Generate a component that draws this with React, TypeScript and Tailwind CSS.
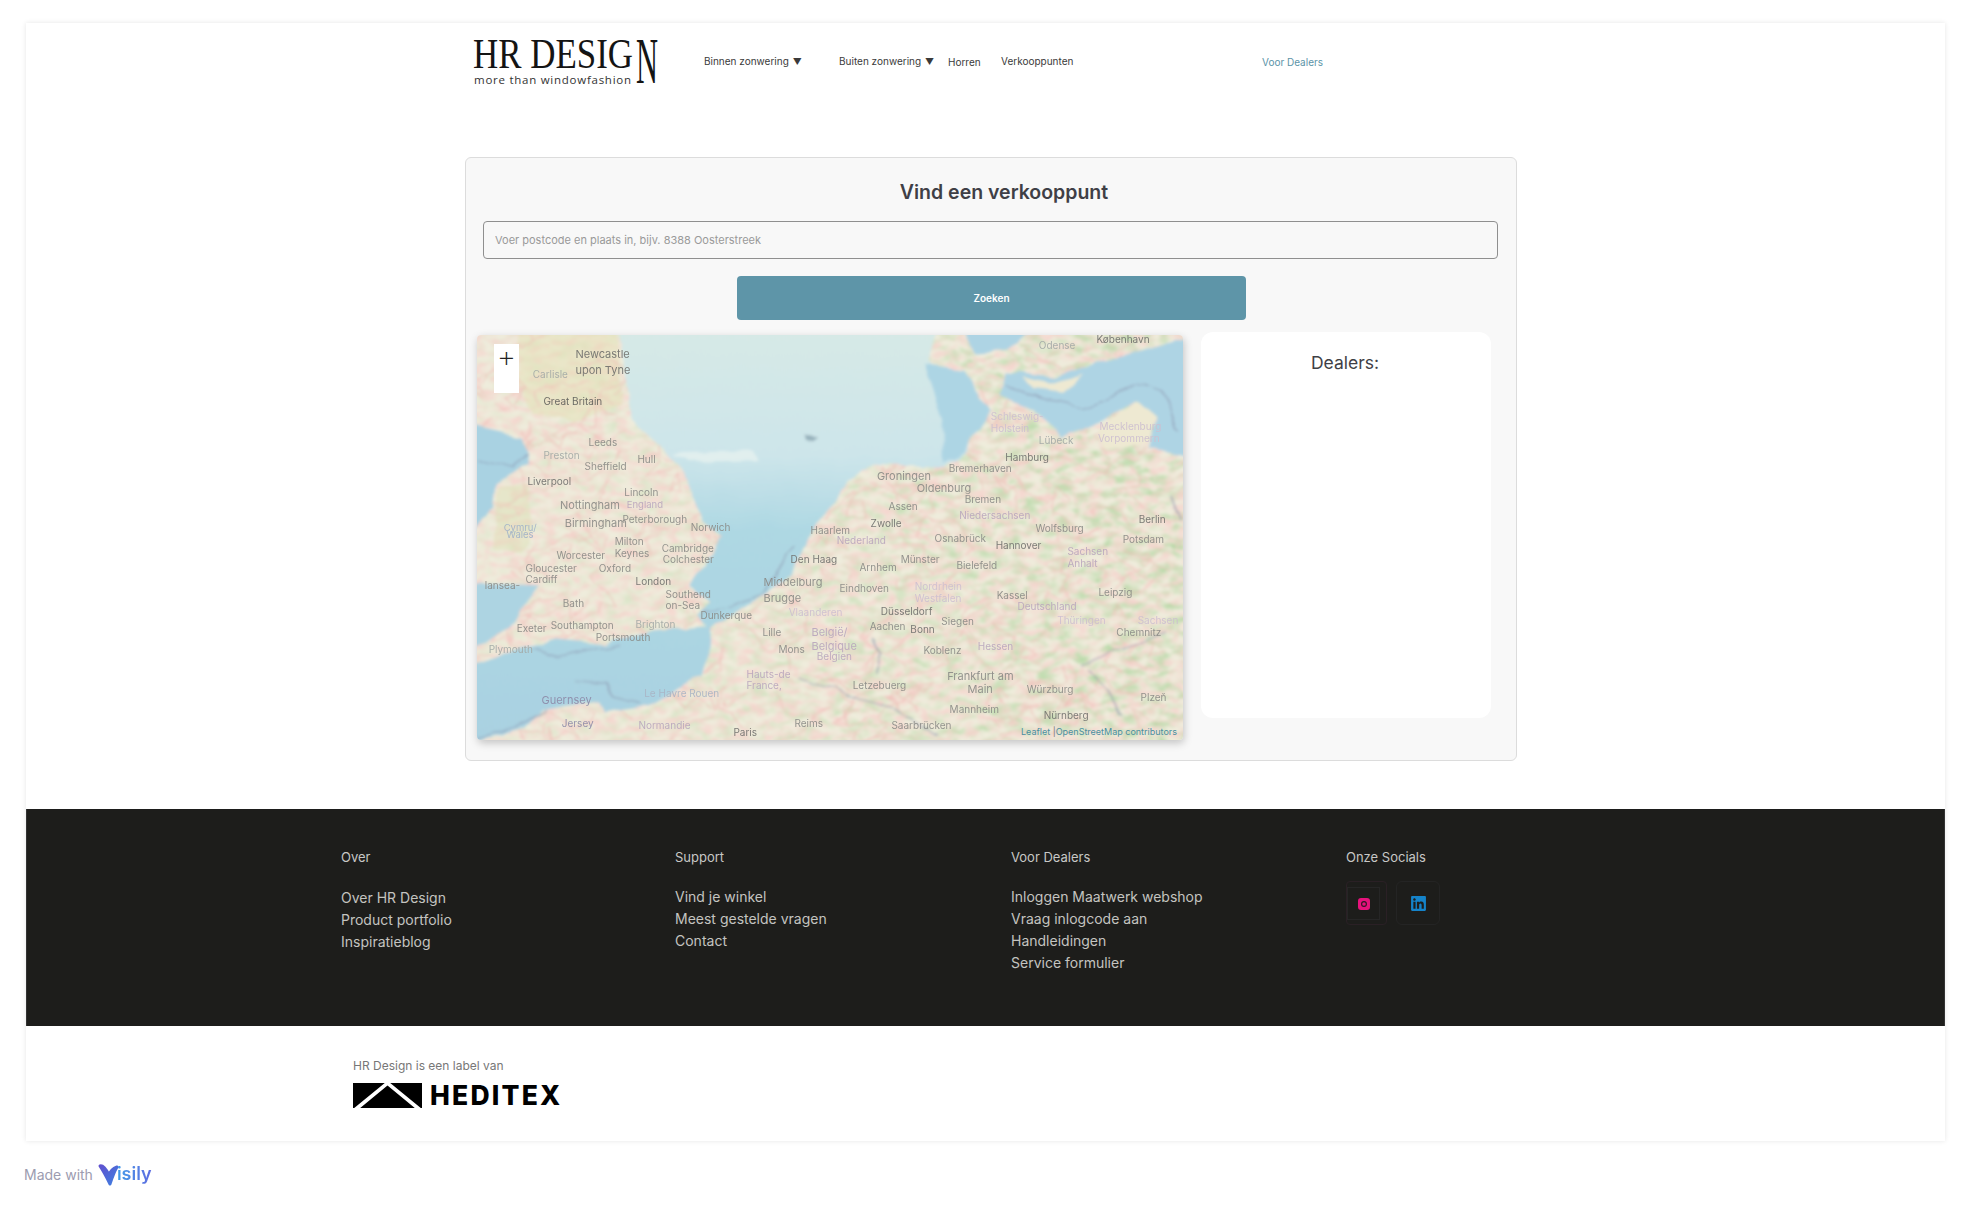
import { FaLinkedin } from "react-icons/fa";

const inter = "font-['Inter','Liberation_Sans',sans-serif]";

// text, left, centre y, size, colour; x and y as measured on the zoomed map crop
const cityDark = "#6f6f6c";
const cityMid = "#8a8a86";
const cityPale = "#a3a9a6";
const region = "#b9a6bd";
const regionPale = "#cdbfd0";

const labels: [string, number, number, number, string][] = [
  ["København", 1313, 56, 10, cityDark],
  ["Odense", 1194, 76, 10, cityPale],
  ["Newcastle", 238, 100, 11, cityDark],
  ["upon Tyne", 238, 148, 11, cityDark],
  ["Carlisle", 150, 163, 10, cityPale],
  ["Great Britain", 172, 244, 10, "#5c5c58"],
  ["Leeds", 265, 365, 10, cityMid],
  ["Preston", 172, 406, 10, cityPale],
  ["Hull", 366, 416, 10, cityMid],
  ["Sheffield", 257, 439, 10, cityMid],
  ["Liverpool", 139, 482, 10, cityDark],
  ["Lincoln", 339, 515, 10, cityMid],
  ["Nottingham", 206, 553, 11, cityMid],
  ["England", 344, 553, 9.5, region],
  ["Birmingham", 216, 607, 11, cityMid],
  ["Peterborough", 335, 596, 10, cityMid],
  ["Norwich", 476, 622, 10, cityMid],
  ["Cymru/", 90, 622, 9.5, "#9fb0c8"],
  ["Wales", 96, 644, 9.5, "#9fb0c8"],
  ["Milton", 319, 662, 10, cityMid],
  ["Keynes", 319, 698, 10, cityMid],
  ["Cambridge", 416, 683, 10, cityMid],
  ["Colchester", 418, 716, 10, cityMid],
  ["Worcester", 199, 704, 10, cityMid],
  ["Gloucester", 135, 743, 10, cityMid],
  ["Oxford", 286, 743, 10, cityMid],
  ["Cardiff", 135, 778, 10, cityMid],
  ["lansea-", 51, 794, 10, cityMid],
  ["London", 362, 782, 10, cityDark],
  ["Southend", 424, 821, 10, cityMid],
  ["on-Sea", 424, 854, 10, cityMid],
  ["Bath", 212, 848, 10, cityMid],
  ["Dunkerque", 496, 884, 10, cityMid],
  ["Exeter", 117, 925, 10, cityMid],
  ["Southampton", 187, 914, 10, cityMid],
  ["Brighton", 362, 911, 10, cityPale],
  ["Portsmouth", 280, 950, 10, cityMid],
  ["Plymouth", 59, 986, 10, cityPale],
  ["Guernsey", 168, 1138, 11, "#8d8aa8"],
  ["Jersey", 210, 1208, 10, "#8d8aa8"],
  ["Le Havre Rouen", 380, 1118, 10, "#a9b4c4"],
  ["Normandie", 368, 1216, 10, region],
  ["Paris", 564, 1235, 10, cityDark],
  ["Reims", 690, 1208, 10, cityMid],
  ["Hauts-de", 591, 1061, 10, region],
  ["France,", 591, 1094, 10, region],
  ["Lille", 624, 935, 10, cityMid],
  ["Mons", 657, 986, 10, cityMid],
  ["België/", 725, 934, 11, region],
  ["Belgique", 725, 978, 11, region],
  ["Belgien", 736, 1007, 10, region],
  ["Middelburg", 626, 784, 11, cityMid],
  ["Brugge", 626, 832, 11, cityMid],
  ["Vlaanderen", 678, 875, 10, regionPale],
  ["Den Haag", 682, 716, 10, cityDark],
  ["Haarlem", 723, 629, 10, cityMid],
  ["Nederland", 777, 661, 10, region],
  ["Zwolle", 847, 608, 10, cityDark],
  ["Assen", 884, 557, 10, cityMid],
  ["Groningen", 860, 466, 11, cityMid],
  ["Oldenburg", 942, 502, 11, cityMid],
  ["Bremen", 1041, 536, 10, cityMid],
  ["Bremerhaven", 1008, 443, 10, cityMid],
  ["Hamburg", 1125, 411, 10, cityDark],
  ["Lübeck", 1194, 359, 10, cityPale],
  ["Schleswig-", 1095, 287, 10, regionPale],
  ["Holstein", 1095, 323, 10, regionPale],
  ["Mecklenburg", 1319, 317, 10, regionPale],
  ["Vorpommern", 1316, 353, 10, regionPale],
  ["Niedersachsen", 1030, 584, 10, region],
  ["Wolfsburg", 1187, 623, 10, cityMid],
  ["Berlin", 1400, 598, 10, cityDark],
  ["Potsdam", 1367, 656, 10, cityMid],
  ["Osnabrück", 979, 653, 10, cityMid],
  ["Hannover", 1105, 674, 10, cityDark],
  ["Sachsen", 1253, 694, 10, region],
  ["Anhalt", 1253, 728, 10, region],
  ["Münster", 909, 716, 10, cityMid],
  ["Arnhem", 824, 740, 10, cityMid],
  ["Bielefeld", 1024, 734, 10, cityMid],
  ["Eindhoven", 783, 803, 10, cityMid],
  ["Nordrhein", 938, 797, 10, regionPale],
  ["Westfalen", 938, 833, 10, regionPale],
  ["Kassel", 1107, 824, 10, cityMid],
  ["Leipzig", 1317, 815, 10, cityMid],
  ["Deutschland", 1150, 857, 10, region],
  ["Düsseldorf", 868, 872, 10, cityDark],
  ["Thüringen", 1232, 899, 10, regionPale],
  ["Sachsen", 1398, 901, 10, regionPale],
  ["Chemnitz", 1354, 935, 10, cityMid],
  ["Siegen", 993, 902, 10, cityMid],
  ["Aachen", 845, 917, 10, cityMid],
  ["Bonn", 929, 926, 10, cityDark],
  ["Koblenz", 956, 989, 10, cityMid],
  ["Hessen", 1068, 977, 10, region],
  ["Frankfurt am", 1005, 1066, 11, cityMid],
  ["Main", 1047, 1105, 11, cityMid],
  ["Würzburg", 1169, 1106, 10, cityMid],
  ["Letzebuerg", 810, 1094, 10, cityMid],
  ["Mannheim", 1010, 1166, 10, cityMid],
  ["Nürnberg", 1204, 1184, 10, cityDark],
  ["Plzeň", 1404, 1130, 10, cityMid],
  ["Saarbrücken", 890, 1214, 10, cityMid],
];

// a fixed scatter of little pink road segments over the land
const roads: string[] = [];
let seed = 17;
const rnd = (n: number) => {
  seed = (seed * 9301 + 49297) % 233280;
  return (seed / 233280) * n;
};
for (let i = 0; i < 260; i++) {
  let x = 40 + rnd(1450);
  let y = 50 + rnd(1200);
  let d = `M${x.toFixed(0)} ${y.toFixed(0)}`;
  for (let j = 0; j < 4; j++) {
    x += rnd(110) - 55;
    y += rnd(110) - 55;
    d += ` L${x.toFixed(0)} ${y.toFixed(0)}`;
  }
  roads.push(d);
}

function MapDrawing() {
  return (
    <svg viewBox="0 0 706 405" className="block w-full h-full">
      <defs>
        <linearGradient id="sea" x1="0" y1="0" x2="0" y2="1">
          <stop offset="0" stopColor="#d6e9e6" />
          <stop offset="0.3" stopColor="#cde5ea" />
          <stop offset="0.48" stopColor="#aed8e3" />
          <stop offset="1" stopColor="#a9d1e1" />
        </linearGradient>
        <linearGradient id="fadeRight" x1="0" y1="0" x2="1" y2="0">
          <stop offset="0" stopColor="#fff" stopOpacity="0.15" />
          <stop offset="0.5" stopColor="#fff" stopOpacity="0.5" />
          <stop offset="1" stopColor="#fff" stopOpacity="0.95" />
        </linearGradient>
        <mask id="rightHeavy">
          <rect width="1568" height="1400" fill="url(#fadeRight)" />
        </mask>
        <filter id="greenNoise" colorInterpolationFilters="sRGB" x="0" y="0" width="100%" height="100%">
          <feTurbulence type="fractalNoise" baseFrequency="0.03 0.045" numOctaves="3" seed="4" />
          <feColorMatrix values="0 0 0 0 0.68  0 0 0 0 0.84  0 0 0 0 0.62  2.6 0 0 0 -1.05" />
        </filter>
        <filter id="pinkNoise" colorInterpolationFilters="sRGB" x="0" y="0" width="100%" height="100%">
          <feTurbulence type="fractalNoise" baseFrequency="0.04 0.055" numOctaves="3" seed="11" />
          <feColorMatrix values="0 0 0 0 0.97  0 0 0 0 0.82  0 0 0 0 0.8  2.6 0 0 0 -1.05" />
        </filter>
        <filter id="soft" x="-2%" y="-2%" width="104%" height="104%">
          <feTurbulence type="fractalNoise" baseFrequency="0.04" numOctaves="2" seed="7" result="n" />
          <feDisplacementMap in="SourceGraphic" in2="n" scale="10" xChannelSelector="R" yChannelSelector="G" />
          <feGaussianBlur stdDeviation="1.6" />
        </filter>
        <filter id="softText" x="-2%" y="-2%" width="104%" height="104%">
          <feGaussianBlur stdDeviation="0.4" />
        </filter>
      </defs>
      <g filter="url(#soft)">
        <g transform="scale(0.4836 0.3333) translate(-35 -44)">
          <rect x="0" y="0" width="1568" height="1400" fill="#efecdc" />
          <rect x="0" y="0" width="1568" height="1400" filter="url(#greenNoise)" mask="url(#rightHeavy)" />
          <rect x="0" y="0" width="1568" height="1400" filter="url(#pinkNoise)" opacity="0.8" />
          <path d="M120 30 L320 30 L335 250 L240 300 L150 280 L120 180 Z" fill="#e2e0b2" opacity="0.45" />
          <path d="M80 500 L140 490 L150 620 L130 700 L70 680 Z" fill="#dadfb0" opacity="0.4" />
          <g stroke="#f0bdb8" strokeWidth="2.5" fill="none" opacity="0.8">
            {roads.map((d) => (
              <path key={d} d={d} />
            ))}
          </g>
          {/* north sea, strait and channel */}
          <path
            fill="url(#sea)"
            d="M325 30 L340 150 L355 300 L430 400 L470 480 L500 600 L545 650 L520 710 L490 760 L470 800 L520 845 L490 880 L510 915 L400 930 L300 975 L200 960 L110 990 L20 1040 L20 1275 L130 1225 L170 1170 L290 1140 L300 1180 L400 1150 L500 1065 L515 1000 L520 920 L600 850 L680 770 L720 660 L760 570 L800 480 L860 430 L1000 440 L1045 400 L1060 340 L1040 270 L1010 190 L970 120 L990 30 Z"
          />
          <path fill="#add5e4" d="M960 130 L1040 150 L1095 270 L1060 350 L1040 400 L1000 430 L1000 300 Z" />
          {/* baltic */}
          <path
            fill="#aed4e4"
            d="M1130 150 L1230 170 L1330 120 L1500 60 L1510 410 L1420 385 L1440 300 L1400 240 L1330 300 L1240 350 L1200 280 L1120 230 Z"
          />
          <path fill="#aed4e4" d="M1040 30 L1180 30 L1130 90 L1070 100 Z" />
          <path fill="#eee9d2" d="M1160 170 L1220 190 L1290 160 L1250 220 L1190 210 Z" />
          <path fill="#eee9d2" d="M1320 330 L1400 240 L1440 290 L1420 370 L1330 380 Z" />
          {/* irish sea and bristol channel */}
          <path fill="#a9d2e2" d="M20 315 L130 350 L145 430 L75 490 L70 570 L20 640 Z" />
          <path fill="#add4e2" d="M20 790 L165 795 L130 860 L115 900 L60 960 L20 980 Z" />
          <path fill="#7f9aa6" opacity="0.7" d="M712 340 L742 345 L735 360 L716 356 Z" />
          <path fill="#e6f1ef" opacity="0.8" d="M440 400 L600 390 L620 420 L470 425 Z" />
          <g stroke="#8b93ad" strokeWidth="3.5" fill="none" opacity="0.65">
            <path d="M1130 190 L1200 235 L1290 265 L1330 240 L1400 185 L1450 210 L1485 330" />
            <path d="M150 985 L200 1012 L270 990 L335 980" />
            <path d="M240 1080 L300 1090 L320 1130 L370 1150" />
            <path d="M35 1260 L120 1220 L180 1170" />
            <path d="M500 872 L560 860 L620 825 L690 680" />
            <path d="M40 420 L110 445 L140 400" />
            <path d="M700 1070 L760 1100 L830 1140 L900 1170 L985 1245" />
            <path d="M850 950 L870 1000 L860 1060" />
            <path d="M1280 1035 L1340 1000 L1460 935" />
            <path d="M1300 1050 L1340 1110 L1370 1190" />
            <path d="M1470 530 L1490 600" />
          </g>
        </g>
      </g>
      <g filter="url(#softText)" opacity="0.9" fontFamily="Inter, 'Liberation Sans', sans-serif">
        {labels.map(([text, zx, zy, size, colour]) => (
          <text
            key={text + zx}
            x={(zx - 35) / 2.063}
            y={(zy - 44) / 3 + size * 0.36}
            fontSize={size}
            fill={colour}
          >
            {text}
          </text>
        ))}
      </g>
    </svg>
  );
}

function Logo() {
  return (
    <svg width="188" height="48" viewBox="0 0 188 48" className="block overflow-visible">
      <text x="1" y="30" fontFamily="'Liberation Serif', serif" fontSize="42" fill="#141414" textLength="160" lengthAdjust="spacingAndGlyphs">
        HR DESIG
      </text>
      <text x="164" y="45" fontFamily="'Liberation Serif', serif" fontSize="65" fill="#141414" textLength="22" lengthAdjust="spacingAndGlyphs">
        N
      </text>
      <text x="2" y="46" fontFamily="'Open Sans', sans-serif" fontSize="11.5" fontWeight="500" fill="#333" textLength="157" lengthAdjust="spacing">
        more than windowfashion
      </text>
    </svg>
  );
}

function HeditexMark() {
  return (
    <svg width="69" height="25" viewBox="0 0 69 25" className="block">
      <rect width="69" height="25" fill="#000" />
      <path d="M33 -1 L36 -1 L69 26 L63 26 L34.5 2.5 L6 26 L0 26 Z" fill="#fff" />
    </svg>
  );
}

function InstagramGlyph() {
  return (
    <svg width="12" height="12" viewBox="0 0 12 12" className="block">
      <rect width="12" height="12" rx="3" fill="#e6127c" />
      <circle cx="6" cy="6" r="2.4" fill="none" stroke="#2b1822" strokeWidth="1.1" />
    </svg>
  );
}

const navItem = "text-[10px] leading-4 text-[#3a3a3a]";

function Nav() {
  return (
    <div className={`h-[134px] flex items-start pl-[446px] pt-[15px] ${inter}`}>
      <Logo />
      <div className="flex items-center pt-[15px] ml-[44px]">
        <span className={`${navItem} w-[135px]`}>
          Binnen zonwering <span className="ml-[1px] text-[9px]">▼</span>
        </span>
        <span className={`${navItem} w-[109px]`}>
          Buiten zonwering <span className="ml-[1px] text-[9px]">▼</span>
        </span>
        <span className={`${navItem} w-[53px]`}>Horren</span>
        <span className={`${navItem} w-[261px] -mt-[2px]`}>Verkooppunten</span>
        <span className="text-[10px] leading-4 text-[#5b93a7]">Voor Dealers</span>
      </div>
    </div>
  );
}

function Locator() {
  return (
    <div className={`ml-[439px] w-[1052px] h-[604px] bg-[#f8f8f8] border border-[#dcdcdc] rounded-md ${inter}`}>
      <h1 className="mt-[20px] pl-[26px] text-center text-[19.5px] leading-7 font-semibold text-[#3f3f46]">
        Vind een verkooppunt
      </h1>
      <input
        type="text"
        placeholder="Voer postcode en plaats in, bijv. 8388 Oosterstreek"
        className="block mt-[15px] ml-[17px] w-[1015px] h-[38px] px-[11px] bg-[#f8f8f8] border border-[#8f8f8f] rounded-sm text-[11px] placeholder:text-[#9a9a9a]"
      />
      <button className="block mt-[17px] ml-[271px] w-[509px] h-[44px] bg-[#5e95a8] rounded-sm text-[10px] font-semibold text-white">
        Zoeken
      </button>
      <div className="flex items-start mt-[12px] ml-[11px]">
        <div className="relative mt-[3px] w-[706px] h-[405px] overflow-hidden shadow-[1px_3px_8px_rgba(0,0,0,0.22)] rounded-sm">
          <MapDrawing />
          <div className="absolute left-[17px] top-[9px] w-[25px] h-[49px] bg-white flex justify-center">
            <span className="text-[30px] leading-[24px] font-extralight text-[#222]">+</span>
          </div>
          <div className="absolute right-[6px] bottom-[2px] text-[9px] leading-3 text-[#4a8fa0]">
            Leaflet <span className="text-[#777]">|</span>OpenStreetMap contributors
          </div>
        </div>
        <div className="ml-[18px] w-[290px] h-[386px] bg-white rounded-xl pt-[18px] pr-[2px] text-center text-[17.5px] leading-[26px] text-[#3f3f46]">
          Dealers:
        </div>
      </div>
    </div>
  );
}

const footerLink = "text-[14px] leading-[22px] text-[#c4c4c0]";
const footerHead = "text-[13px] leading-5 text-[#c8c8c6]";

function FooterColumn({ title, links, width, shift }: { title: string; links: string[]; width: string; shift: string }) {
  return (
    <div className={width}>
      <div className={footerHead}>{title}</div>
      <div className={shift}>
        {links.map((l) => (
          <div key={l} className={footerLink}>
            {l}
          </div>
        ))}
      </div>
    </div>
  );
}

function Footer() {
  return (
    <div className={`mt-[48px] h-[217px] bg-[#1d1d1b] border-x border-[#333] flex pl-[314px] pt-[38px] ${inter}`}>
      <FooterColumn
        title="Over"
        width="w-[334px]"
        shift="mt-[20px]"
        links={["Over HR Design", "Product portfolio", "Inspiratieblog"]}
      />
      <FooterColumn
        title="Support"
        width="w-[336px]"
        shift="mt-[19px]"
        links={["Vind je winkel", "Meest gestelde vragen", "Contact"]}
      />
      <FooterColumn
        title="Voor Dealers"
        width="w-[335px]"
        shift="mt-[19px]"
        links={["Inloggen Maatwerk webshop", "Vraag inlogcode aan", "Handleidingen", "Service formulier"]}
      />
      <div>
        <div className={footerHead}>Onze Socials</div>
        <div className="flex mt-[14px]">
          <div className="w-[41px] h-[44px] border border-[#2a2025] rounded-sm flex items-center">
            <div className="w-[33px] h-[33px] border border-[#262626] flex items-center justify-center pl-[1px] mt-[1px]">
              <InstagramGlyph />
            </div>
          </div>
          <div className="ml-[9px] w-[44px] h-[44px] border border-[#242424] rounded-md flex items-center justify-center">
            <FaLinkedin size={17} color="#1583c9" />
          </div>
        </div>
      </div>
    </div>
  );
}

function LabelOf() {
  return (
    <div className={`h-[115px] pl-[327px] pt-[32px] ${inter}`}>
      <div className="text-[12px] leading-4 text-[#777]">HR Design is een label van</div>
      <div className="flex items-center mt-[9px]">
        <HeditexMark />
        <span className="ml-[8px] text-[26.5px] leading-[25px] font-extrabold tracking-[2.2px] text-black">HEDITEX</span>
      </div>
    </div>
  );
}

function MadeWith() {
  return (
    <div className={`flex items-center ml-[24px] mt-[19px] h-[28px] ${inter}`}>
      <span className="text-[14px] text-[#9c9cb0]">Made with</span>
      <div className="flex items-end ml-[4px]">
        <svg width="22" height="24" viewBox="0 0 22 24" className="block">
          <defs>
            <linearGradient id="visilyV" x1="0" y1="0" x2="1" y2="1">
              <stop offset="0" stopColor="#5f52cf" />
              <stop offset="1" stopColor="#3f7fe0" />
            </linearGradient>
          </defs>
          <path d="M3 4 C6 3 9 7 12 13 C13 10 15 7 20 5 C17 10 15 16 13 22 C10 16 7 10 3 4 Z" fill="url(#visilyV)" stroke="url(#visilyV)" strokeWidth="3" strokeLinejoin="round" />
        </svg>
        <span className="-ml-[2px] bg-gradient-to-r from-[#3f9be8] to-[#5d6be0] bg-clip-text text-[18px] leading-[24px] font-semibold text-transparent">
          isily
        </span>
      </div>
    </div>
  );
}

export default function App() {
  return (
    <div className="min-h-[1207px] bg-white pt-[23px] overflow-hidden">
      <div className="ml-[26px] w-[1919px] shadow-[0_0_5px_rgba(0,0,0,0.1)] bg-white">
        <Nav />
        <Locator />
        <Footer />
        <LabelOf />
      </div>
      <MadeWith />
    </div>
  );
}
